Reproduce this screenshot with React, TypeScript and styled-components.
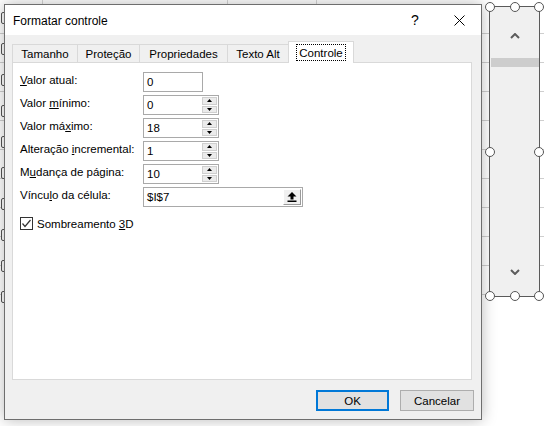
import React from 'react';
import styled, {createGlobalStyle} from 'styled-components';

const GlobalStyle = createGlobalStyle`
  html, body {
    margin: 0;
    padding: 0;
    background: #fff;
  }
  body {
    font-family: 'Liberation Sans', Arial, sans-serif;
    color: #000;
  }
`

const Sheet = styled.div`
  position: relative;
  width: 544px;
  height: 426px;
  overflow: hidden;
  background-color: #fff;
  background-image:
    linear-gradient(to right, transparent 0 42px, #d6d6d6 42px 43px, transparent 43px 227px, #d6d6d6 227px 228px, transparent 228px 316px, #d6d6d6 316px 317px, transparent 317px),
    repeating-linear-gradient(to bottom, transparent 0 28px, #cfcfcf 28px 29px);
  background-size: 100% 300px, 100% 295px;
  background-position: 0 0, 0 5px;
  background-repeat: no-repeat;
`

/* controls of the sheet hidden behind the dialog */
const SheetControls = styled.div`
  position: absolute;
  left: 1px;
  top: 12px;
  display: flex;
  flex-direction: column;
  gap: 19px;
`
const SheetBox = styled.div`
  width: 10px;
  height: 10px;
  border: 1px solid #555;
  border-radius: 2px;
  background: #fff;
`

const Dialog = styled.div`
  position: absolute;
  left: 4px;
  top: 4px;
  width: 478px;
  height: 416px;
  box-sizing: border-box;
  border: 1px solid #6e6e6e;
  background: #f0f0f0;
  display: flex;
  flex-direction: column;
  box-shadow: 0 0 14px rgba(0, 0, 0, 0.28);
  z-index: 2;
`
const TitleBar = styled.div`
  height: 30px;
  flex-shrink: 0;
  background: #fff;
  display: flex;
  align-items: center;
  padding-left: 8px;
`
const Title = styled.div`
  flex: 1;
  font-size: 12px;
  padding-top: 1px;
`
const TitleButton = styled.div`
  width: 44px;
  height: 30px;
  display: flex;
  align-items: center;
  justify-content: center;
  font-size: 14px;
`

const Body = styled.div`
  flex: 1;
  display: flex;
  flex-direction: column;
  padding: 7px 9px 0 7px;
`
const TabRow = styled.div`
  display: flex;
  align-items: flex-end;
  height: 21px;
  margin-bottom: -1px;
  position: relative;
  z-index: 1;
`
const Tab = styled.div<{ $active?: boolean; $width: number }>`
  width: ${p => p.$width}px;
  height: ${p => p.$active ? 22 : 19}px;
  box-sizing: border-box;
  margin-left: -1px;
  border: 1px solid #d9d9d9;
  border-bottom: ${p => p.$active ? 'none' : '1px solid #d9d9d9'};
  background: ${p => p.$active ? '#fff' : '#f0f0f0'};
  font-size: 11.5px;
  display: flex;
  align-items: center;
  justify-content: center;
  padding-bottom: ${p => p.$active ? 1 : 0}px;
  position: relative;
  z-index: ${p => p.$active ? 2 : 1};

  &:first-child {
    margin-left: 0;
  }
`
const FocusText = styled.span`
  outline: 1px dotted #000;
  padding: 2px 2px 1px;
`

const Panel = styled.div`
  flex: 1;
  background: #fff;
  border: 1px solid #d9d9d9;
  padding: 9px 7px;
  display: flex;
  flex-direction: column;
`
const Form = styled.div`
  display: grid;
  grid-template-columns: 123px auto;
  grid-auto-rows: 20px;
  row-gap: 3px;
  justify-items: start;
`
const Label = styled.div`
  font-size: 11.5px;
  line-height: 16px;
  white-space: nowrap;
`
const U = styled.span`
  text-decoration: underline;
`
const Field = styled.div<{ $width: number }>`
  width: ${p => p.$width}px;
  height: 20px;
  box-sizing: border-box;
  border: 1px solid #a9a9a9;
  background: #fff;
  display: flex;
`
const Value = styled.div`
  flex: 1;
  font-size: 11.5px;
  line-height: 18px;
  padding-left: 3px;
`
const SpinBox = styled.div`
  width: 15px;
  display: flex;
  flex-direction: column;
  padding: 1px 1px 1px 0;
  gap: 1px;
`
const SpinButton = styled.div`
  flex: 1;
  background: #ebebeb;
  border: 1px solid #cfcfcf;
  display: flex;
  align-items: center;
  justify-content: center;
`
const RefButton = styled.div`
  width: 18px;
  margin: 1px;
  box-sizing: border-box;
  background: #f0f0f0;
  border-top: 1px solid #fff;
  border-left: 1px solid #fff;
  border-right: 1px solid #9a9a9a;
  border-bottom: 1px solid #9a9a9a;
  display: flex;
  align-items: center;
  justify-content: center;
`
const CheckRow = styled.div`
  display: flex;
  align-items: center;
  gap: 4px;
  margin-top: 10px;
  font-size: 11.5px;
`
const CheckBox = styled.div`
  width: 13px;
  height: 13px;
  box-sizing: border-box;
  border: 1px solid #333;
  background: #fff;
  display: flex;
  align-items: center;
  justify-content: center;
`

const Footer = styled.div`
  display: flex;
  justify-content: flex-end;
  gap: 11px;
  padding: 10px 0 8px;
  margin-right: -2px;
`
const Button = styled.div<{ $primary?: boolean }>`
  width: ${p => p.$primary ? 73 : 74}px;
  height: 21px;
  box-sizing: border-box;
  background: #e1e1e1;
  border: ${p => p.$primary ? '2px solid #0078d7' : '1px solid #adadad'};
  font-size: 11.5px;
  display: flex;
  align-items: center;
  justify-content: center;
`

/* scroll bar control selected on the sheet */
const ScrollControl = styled.div`
  position: absolute;
  left: 489px;
  top: 6px;
  width: 51px;
  height: 291px;
  box-sizing: border-box;
  border: 1px solid #5a5a5a;
  background: #f0f0f0;
  display: flex;
  flex-direction: column;
  z-index: 3;
`
const ArrowZone = styled.div<{ $down?: boolean }>`
  height: ${p => p.$down ? 50 : 51}px;
  display: flex;
  justify-content: center;
  align-items: ${p => p.$down ? 'flex-end' : 'center'};
  padding-top: ${p => p.$down ? 0 : 6}px;
  padding-bottom: ${p => p.$down ? 21 : 0}px;
  box-sizing: border-box;
`
const Thumb = styled.div`
  height: 9px;
  background: #cdcdcd;
  margin-left: 1px;
`
const Track = styled.div`
  flex: 1;
`
const Handle = styled.div<{ $x: number; $y: number }>`
  position: absolute;
  left: ${p => p.$x}%;
  top: ${p => p.$y}%;
  width: 10px;
  height: 10px;
  box-sizing: border-box;
  margin: -5px 0 0 -5px;
  border: 1.6px solid #555;
  border-radius: 50%;
  background: #fff;
`

const TriangleUp = () => (
    <svg width="5" height="3" viewBox="0 0 5 3"><polygon points="2.5,0 5,3 0,3" fill="#000"/></svg>
)
const TriangleDown = () => (
    <svg width="5" height="3" viewBox="0 0 5 3"><polygon points="0,0 5,0 2.5,3" fill="#000"/></svg>
)
const Chevron = ({down}: { down?: boolean }) => (
    <svg width="10" height="6" viewBox="0 0 10 6">
        <polyline points={down ? '1,1 5,5 9,1' : '1,5 5,1 9,5'} fill="none" stroke="#5c5c5c" strokeWidth="2"/>
    </svg>
)

type Kind = 'plain' | 'spin' | 'ref'
const fields: { label: React.ReactNode; value: string; kind: Kind }[] = [
    {label: <><U>V</U>alor atual:</>, value: '0', kind: 'plain'},
    {label: <>Valor <U>m</U>ínimo:</>, value: '0', kind: 'spin'},
    {label: <>Valor má<U>x</U>imo:</>, value: '18', kind: 'spin'},
    {label: <>Alteração <U>i</U>ncremental:</>, value: '1', kind: 'spin'},
    {label: <>M<U>u</U>dança de página:</>, value: '10', kind: 'spin'},
    {label: <>Víncu<U>l</U>o da célula:</>, value: '$I$7', kind: 'ref'},
]
const widths: Record<Kind, number> = {plain: 60, spin: 76, ref: 160}

const tabs = [
    {name: 'Tamanho', width: 66},
    {name: 'Proteção', width: 63},
    {name: 'Propriedades', width: 89},
    {name: 'Texto Alt', width: 62},
    {name: 'Controle', width: 66},
]

const handles = [
    [0, 0], [50, 0], [100, 0],
    [0, 50], [100, 50],
    [0, 100], [50, 100], [100, 100],
]

const App: React.FC = () => {
    return (
        <Sheet>
            <GlobalStyle/>
            <SheetControls>
                {Array.from({length: 10}).map((_, i) => <SheetBox key={i}/>)}
            </SheetControls>
            <Dialog>
                <TitleBar>
                    <Title>Formatar controle</Title>
                    <TitleButton>?</TitleButton>
                    <TitleButton>
                        <svg width="11" height="11" viewBox="0 0 11 11">
                            <line x1="0.5" y1="0.5" x2="10.5" y2="10.5" stroke="#000" strokeWidth="1"/>
                            <line x1="10.5" y1="0.5" x2="0.5" y2="10.5" stroke="#000" strokeWidth="1"/>
                        </svg>
                    </TitleButton>
                </TitleBar>
                <Body>
                    <TabRow>
                        {tabs.map(t => t.name === 'Controle'
                            ? <Tab key={t.name} $width={t.width} $active><FocusText>{t.name}</FocusText></Tab>
                            : <Tab key={t.name} $width={t.width}>{t.name}</Tab>)}
                    </TabRow>
                    <Panel>
                        <Form>
                            {fields.map((f, i) => (
                                <React.Fragment key={i}>
                                    <Label>{f.label}</Label>
                                    <Field $width={widths[f.kind]}>
                                        <Value>{f.value}</Value>
                                        {f.kind === 'spin' && (
                                            <SpinBox>
                                                <SpinButton><TriangleUp/></SpinButton>
                                                <SpinButton><TriangleDown/></SpinButton>
                                            </SpinBox>
                                        )}
                                        {f.kind === 'ref' && (
                                            <RefButton>
                                                <svg width="10" height="10" viewBox="0 0 10 10">
                                                    <polygon points="5,0 9.5,4.5 6.5,4.5 6.5,7.5 3.5,7.5 3.5,4.5 0.5,4.5" fill="#000"/>
                                                    <rect x="0.5" y="8.5" width="9" height="1.5" fill="#000"/>
                                                </svg>
                                            </RefButton>
                                        )}
                                    </Field>
                                </React.Fragment>
                            ))}
                        </Form>
                        <CheckRow>
                            <CheckBox>
                                <svg width="11" height="11" viewBox="0 0 11 11">
                                    <polyline points="1.5,5.5 4,8.5 9.5,2" fill="none" stroke="#333" strokeWidth="1.2"/>
                                </svg>
                            </CheckBox>
                            <span>Sombreamento <U>3</U>D</span>
                        </CheckRow>
                    </Panel>
                    <Footer>
                        <Button $primary>OK</Button>
                        <Button>Cancelar</Button>
                    </Footer>
                </Body>
            </Dialog>
            <ScrollControl>
                <ArrowZone><Chevron/></ArrowZone>
                <Thumb/>
                <Track/>
                <ArrowZone $down><Chevron down/></ArrowZone>
                {handles.map(([x, y], i) => <Handle key={i} $x={x} $y={y}/>)}
            </ScrollControl>
        </Sheet>
    );
};

export default App;
